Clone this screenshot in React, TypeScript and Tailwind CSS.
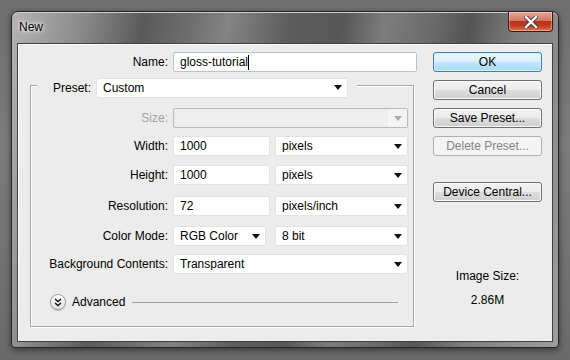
import React from "react";

const font = "font-['Liberation_Sans','Noto_Sans',sans-serif]";

function Arrow({ disabled }: { disabled?: boolean }) {
  return (
    <svg width="8" height="5" viewBox="0 0 8 5" className="shrink-0">
      <polygon points="0,0 8,0 4,5" fill={disabled ? "#a9a9a9" : "#111"} />
    </svg>
  );
}

function Select({ value, w, disabled }: { value: string; w: string; disabled?: boolean }) {
  return (
    <div
      className={`${w} h-[20px] flex items-center rounded-[2px] border ${
        disabled ? "border-[#b9b9b9] bg-[#eeeeee]" : "border-[#e2e2e2] bg-white"
      }`}
    >
      <span className="flex-1 pl-[6px] truncate text-[12px] leading-none text-black">{value}</span>
      {disabled ? (
        <div className="h-full w-[19px] border-l border-[#f6f6f6] bg-[#f3f3f3] flex items-center justify-center">
          <Arrow disabled />
        </div>
      ) : (
        <div className="w-[18px] flex items-center justify-center">
          <Arrow />
        </div>
      )}
    </div>
  );
}

function Input({ value, w }: { value: string; w: string }) {
  return (
    <div className={`${w} h-[20px] flex items-center rounded-[2px] border border-[#e2e2e2] bg-white pl-[6px] text-[12px] leading-none text-black`}>
      {value}
    </div>
  );
}

function Row({ label, children, mt, gap }: { label: string; children: React.ReactNode; mt: string; gap: string }) {
  return (
    <div className={`flex items-center ${mt}`}>
      <div className="w-[137px] text-right text-[12px] leading-none text-black">{label}</div>
      <div className={`ml-[5px] flex ${gap}`}>{children}</div>
    </div>
  );
}

function Button({ label, primary, disabled, mt }: { label: string; primary?: boolean; disabled?: boolean; mt: string }) {
  const skin = disabled
    ? "border-[#adb2b5] bg-[#f4f4f4] text-[#838383]"
    : primary
    ? "border-[#3c7fb1] bg-[linear-gradient(#eaf6fd_0%,#d9f0fc_50%,#bee6fd_50%,#a7d9f5_100%)] text-black shadow-[inset_0_0_0_1px_#d8f0ff]"
    : "border-[#707070] bg-[linear-gradient(#f2f2f2_0%,#ebebeb_50%,#dddddd_50%,#cfcfcf_100%)] text-black shadow-[inset_0_0_0_1px_#fbfbfb]";
  return (
    <div className={`${mt} w-[109px] h-[20px] rounded-[3px] border ${skin} flex items-center justify-center text-[12px] leading-none`}>
      {label}
    </div>
  );
}

export default function App() {
  return (
    <div className={`w-[570px] h-[360px] overflow-hidden bg-[linear-gradient(#6e6e6e,#7c7c7c_40%,#6a6a6a)] pl-[11px] pt-[11px] ${font}`}>
      {/* window frame */}
      <div className="w-[548px] h-[337px] rounded-t-[7px] rounded-b-[4px] border border-[#262626] bg-[linear-gradient(100deg,#b4b4b4_0%,#8a8a8a_12%,#5a5a5a_22%,#6e6e6e_30%,#848484_36%,#5d5d5d_46%,#575757_55%,#7c7c7c_62%,#6a6a6a_70%,#545454_76%,#7d7d7d_84%,#9d9d9d_100%)] shadow-[inset_0_1px_0_#d0d0d0,0_2px_6px_rgba(0,0,0,0.5)] flex flex-col px-[5px] pb-[5px]">
        {/* title bar */}
        <div className="h-[31px] flex justify-between items-start">
          <div className="pt-[9px] pl-[2px] text-[12px] leading-none text-black [text-shadow:0_0_6px_#fff,0_0_3px_#fff]">New</div>
          <div className="w-[45px] h-[20px] rounded-b-[4px] border border-t-0 border-[#3b1a14] bg-[linear-gradient(#e8a493_0%,#d47a63_45%,#b8311a_50%,#c23f22_75%,#e07a52_100%)] shadow-[inset_0_0_0_1px_rgba(255,255,255,0.35)] flex items-center justify-center">
            <svg width="14" height="12" viewBox="0 0 14 12">
              <path d="M2 1 L12 11 M12 1 L2 11" stroke="#3a3a3a" strokeWidth="4.2" strokeLinecap="square" />
              <path d="M2 1 L12 11 M12 1 L2 11" stroke="#fff" strokeWidth="2.4" strokeLinecap="square" />
            </svg>
          </div>
        </div>

        {/* client area */}
        <div className="flex-1 border border-[#404040] bg-[#ececec] shadow-[inset_1px_1px_0_#fff] flex">
          {/* left form */}
          <div className="w-[400px] flex flex-col pt-[8px]">
            <div className="flex items-center">
              <div className="w-[150px] text-right text-[12px] leading-none text-black">Name:</div>
              <div className="ml-[5px] w-[244px] h-[20px] flex items-center rounded-[2px] border border-[#a9c7e5] bg-white pl-[6px] text-[12px] leading-none text-black">
                gloss-tutorial
                <span className="w-[1px] h-[15px] bg-black" />
              </div>
            </div>

            {/* preset group box */}
            <div className="mt-[13px] ml-[12px] w-[384px] h-[242px] border border-[#a6a6a6] shadow-[1px_1px_0_#fff,inset_1px_1px_0_#fff] flex flex-col">
              <div className="-mt-[8px] ml-[6px] w-[320px] h-[19px] bg-[#ececec] flex items-center">
                <div className="w-[59px] pr-[5px] text-right text-[12px] leading-none text-black">Preset:</div>
                <Select value="Custom" w="w-[252px]" />
              </div>

              <div className="flex items-center mt-[11px]">
                <div className="w-[137px] text-right text-[12px] leading-none text-[#a3a3a3]">Size:</div>
                <div className="ml-[5px]">
                  <Select value="" w="w-[235px]" disabled />
                </div>
              </div>
              <Row label="Width:" mt="mt-[8px]" gap="gap-[5px]">
                <Input value="1000" w="w-[97px]" />
                <Select value="pixels" w="w-[133px]" />
              </Row>
              <Row label="Height:" mt="mt-[9px]" gap="gap-[5px]">
                <Input value="1000" w="w-[97px]" />
                <Select value="pixels" w="w-[133px]" />
              </Row>
              <Row label="Resolution:" mt="mt-[11px]" gap="gap-[5px]">
                <Input value="72" w="w-[97px]" />
                <Select value="pixels/inch" w="w-[133px]" />
              </Row>
              <Row label="Color Mode:" mt="mt-[10px]" gap="gap-[9px]">
                <Select value="RGB Color" w="w-[93px]" />
                <Select value="8 bit" w="w-[133px]" />
              </Row>
              <Row label="Background Contents:" mt="mt-[8px]" gap="gap-[5px]">
                <Select value="Transparent" w="w-[235px]" />
              </Row>

              <div className="mt-[20px] ml-[19px] flex items-center">
                <div className="w-[16px] h-[16px] rounded-full border border-[#9a9a9a] bg-[linear-gradient(#ffffff,#e4e4e4)] shadow-[0_1px_1px_rgba(0,0,0,0.2)] flex items-center justify-center">
                  <svg width="8" height="9" viewBox="0 0 8 9">
                    <path d="M1 1 L4 3.5 L7 1 M1 5 L4 7.5 L7 5" stroke="#111" strokeWidth="1.4" fill="none" />
                  </svg>
                </div>
                <div className="ml-[6px] text-[12px] leading-none text-black">Advanced</div>
                <div className="ml-[7px] w-[266px] h-[1px] bg-[#a0a0a0]" />
              </div>
            </div>
          </div>

          {/* right buttons */}
          <div className="ml-[15px] flex flex-col pt-[8px]">
            <Button label="OK" primary mt="mt-0" />
            <Button label="Cancel" mt="mt-[8px]" />
            <Button label="Save Preset..." mt="mt-[8px]" />
            <Button label="Delete Preset..." disabled mt="mt-[8px]" />
            <Button label="Device Central..." mt="mt-[26px]" />
            <div className="mt-[68px] text-center text-[12px] leading-none text-black">Image Size:</div>
            <div className="mt-[12px] text-center text-[12px] leading-none text-black">2.86M</div>
          </div>
        </div>
      </div>
    </div>
  );
}
